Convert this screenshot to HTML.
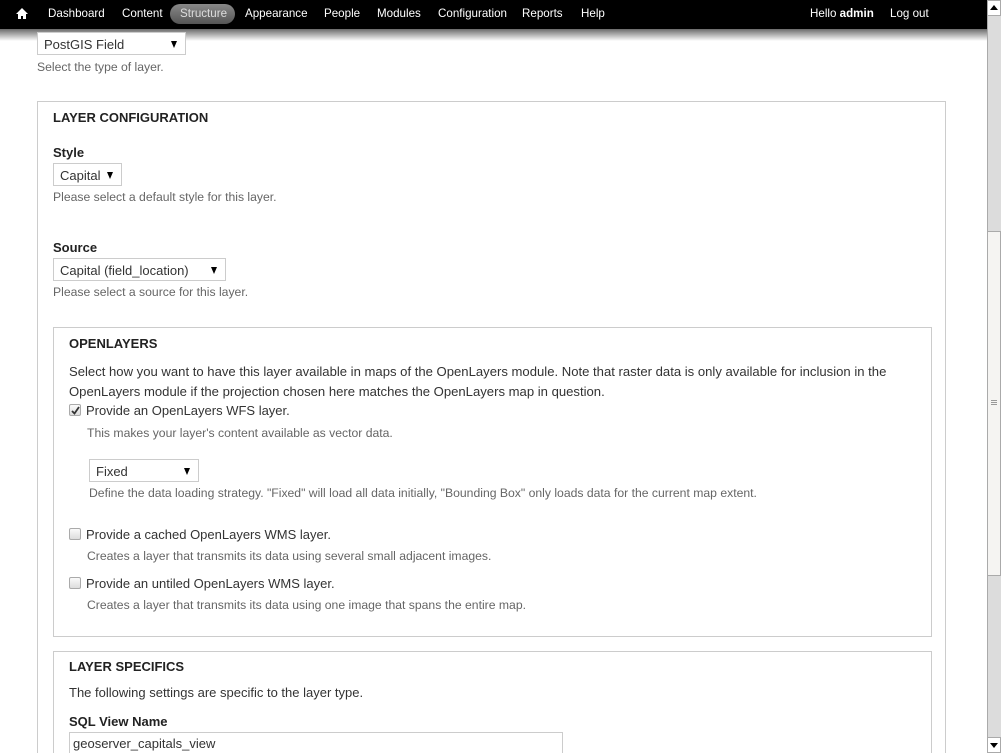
<!DOCTYPE html>
<html style="overflow:hidden;height:753px"><head><meta charset="utf-8"><style>
*{margin:0;padding:0;box-sizing:border-box}
body{width:1001px;height:753px;overflow:hidden;background:#fff;font-family:"Liberation Sans",Arial,sans-serif;font-size:13px;color:#333;position:relative}
.a{position:absolute;white-space:nowrap}
#bar{position:absolute;left:0;top:0;width:987px;height:29px;background:#000}
#sh{position:absolute;left:0;top:29px;width:987px;height:12px;background:linear-gradient(#6a6a6a,#fff)}
.n{position:absolute;top:7px;color:#fff;font-size:11.6px}
.sel{position:absolute;border:1px solid #ccc;background:#fff;height:23px;font-size:13px;color:#333;padding:4px 0 0 6px}
.sel:after{content:"";position:absolute;right:8px;top:8px;border-left:3.5px solid transparent;border-right:3.5px solid transparent;border-top:7px solid #000}
.fs{position:absolute;border:1px solid #ccc}
.t{position:absolute;font-weight:bold;font-size:13px;color:#222}
.d{position:absolute;font-size:12.2px;color:#666;white-space:nowrap}
.cb{position:absolute;width:12px;height:12px;border:1px solid #aaa;border-radius:2px;background:linear-gradient(#fafafa,#ddd)}
</style></head><body>
<div id="bar"></div><div id="sh"></div>
<svg class="a" style="left:15px;top:7px" width="14" height="13" viewBox="0 0 14 13"><path d="M7 1L1 7h2v5h3V9h2v3h3V7h2z" fill="#fff"/></svg>
<div class="n" style="left:48px">Dashboard</div>
<div class="n" style="left:122px">Content</div>
<div class="a" style="left:170px;top:4px;width:65px;height:20px;border-radius:10px;background:linear-gradient(#888,#555)"></div>
<div class="n" style="left:180px;color:#ddd">Structure</div>
<div class="n" style="left:245px">Appearance</div>
<div class="n" style="left:324px">People</div>
<div class="n" style="left:377px">Modules</div>
<div class="n" style="left:438px">Configuration</div>
<div class="n" style="left:522px">Reports</div>
<div class="n" style="left:581px">Help</div>
<div class="n" style="left:810px">Hello <b>admin</b></div>
<div class="n" style="left:890px">Log out</div>

<div class="a" style="left:987px;top:0;width:14px;height:753px;background:#dcdcdc;border-left:1px solid #aaa"></div>
<div class="a" style="left:987px;top:0;width:14px;height:16px;background:#fff;border:1px solid #aaa"></div>
<div class="a" style="left:990px;top:5px;border-left:4px solid transparent;border-right:4px solid transparent;border-bottom:5px solid #000"></div>
<div class="a" style="left:987px;top:231px;width:14px;height:345px;background:#f5f4f2;border:1px solid #aaa"></div>
<div class="a" style="left:991px;top:400px;width:6px;height:5px;border-top:1px solid #999;border-bottom:1px solid #999"></div>
<div class="a" style="left:991px;top:402px;width:6px;height:1px;background:#999"></div>
<div class="a" style="left:987px;top:737px;width:14px;height:16px;background:#fff;border:1px solid #aaa"></div>
<div class="a" style="left:990px;top:743px;border-left:4px solid transparent;border-right:4px solid transparent;border-top:5px solid #000"></div>

<div class="sel" style="left:37px;top:32px;width:149px">PostGIS Field</div>
<div class="d" style="left:37px;top:60px">Select the type of layer.</div>

<div class="fs" style="left:37px;top:101px;width:909px;height:660px"></div>
<div class="t" style="left:53px;top:110px">LAYER CONFIGURATION</div>
<div class="t" style="left:53px;top:145px">Style</div>
<div class="sel" style="left:53px;top:163px;width:69px">Capital</div>
<div class="d" style="left:53px;top:190px">Please select a default style for this layer.</div>
<div class="t" style="left:53px;top:240px">Source</div>
<div class="sel" style="left:53px;top:258px;width:173px">Capital (field_location)</div>
<div class="d" style="left:53px;top:285px">Please select a source for this layer.</div>

<div class="fs" style="left:53px;top:327px;width:879px;height:310px"></div>
<div class="t" style="left:69px;top:336px">OPENLAYERS</div>
<div class="a" style="left:69px;top:362px;line-height:20px;color:#333;font-size:13.1px">Select how you want to have this layer available in maps of the OpenLayers module. Note that raster data is only available for inclusion in the<br>OpenLayers module if the projection chosen here matches the OpenLayers map in question.</div>
<div class="cb" style="left:69px;top:404px"></div>
<svg class="a" style="left:70px;top:405px" width="11" height="11" viewBox="0 0 11 11"><path d="M2 6l2.5 2.5L9 2" stroke="#333" stroke-width="1.8" fill="none"/></svg>
<div class="a" style="left:86px;top:403px">Provide an OpenLayers WFS layer.</div>
<div class="d" style="left:87px;top:426px">This makes your layer's content available as vector data.</div>
<div class="sel" style="left:89px;top:459px;width:110px">Fixed</div>
<div class="d" style="left:89px;top:486px">Define the data loading strategy. "Fixed" will load all data initially, "Bounding Box" only loads data for the current map extent.</div>
<div class="cb" style="left:69px;top:528px"></div>
<div class="a" style="left:86px;top:527px">Provide a cached OpenLayers WMS layer.</div>
<div class="d" style="left:87px;top:549px">Creates a layer that transmits its data using several small adjacent images.</div>
<div class="cb" style="left:69px;top:577px"></div>
<div class="a" style="left:86px;top:576px">Provide an untiled OpenLayers WMS layer.</div>
<div class="d" style="left:87px;top:598px">Creates a layer that transmits its data using one image that spans the entire map.</div>

<div class="fs" style="left:53px;top:651px;width:879px;height:110px"></div>
<div class="t" style="left:69px;top:659px">LAYER SPECIFICS</div>
<div class="a" style="left:69px;top:685px">The following settings are specific to the layer type.</div>
<div class="t" style="left:69px;top:714px">SQL View Name</div>
<div class="a" style="left:69px;top:732px;width:494px;height:22px;border:1px solid #ccc;padding:3px 0 0 3px">geoserver_capitals_view</div>
</body></html>
